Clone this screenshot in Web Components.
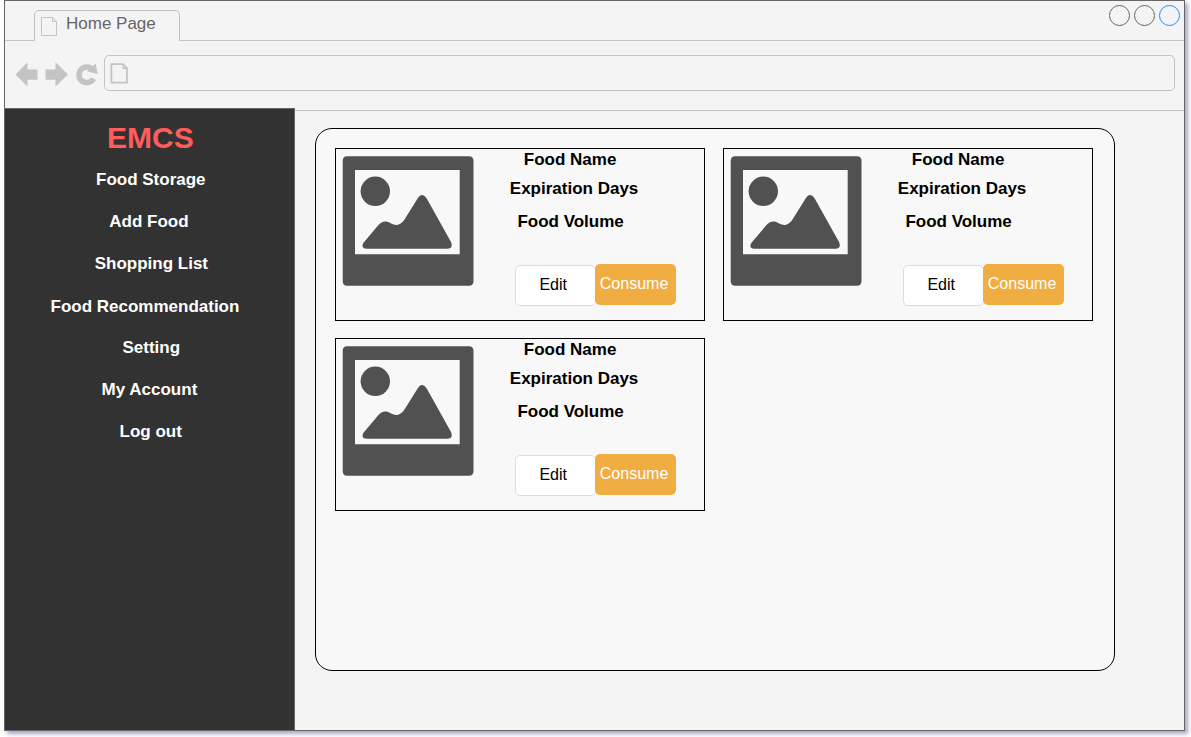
<!DOCTYPE html>
<html lang="en">
<head>
<meta charset="utf-8">
<title>Home Page</title>
<style>
body { margin: 0; min-height: 737px; background: #fff; font: 17px/19px "Liberation Sans", Arial, sans-serif; }
</style>
</head>
<body>
<browser-window>
  <tab-strip slot="chrome">Home Page</tab-strip>
  <address-bar slot="chrome"></address-bar>
  <side-nav slot="side">
    <span slot="brand">EMCS</span>
    <nav-item style="--x:91px">Food Storage</nav-item>
    <nav-item style="--x:104.3px;--gap:23px">Add Food</nav-item>
    <nav-item style="--x:89.7px;--gap:23px">Shopping List</nav-item>
    <nav-item style="--x:45.5px;--gap:24px">Food Recommendation</nav-item>
    <nav-item style="--x:117.5px;--gap:22px">Setting</nav-item>
    <nav-item style="--x:96.6px;--gap:23px">My Account</nav-item>
    <nav-item style="--x:114.6px;--gap:23px">Log out</nav-item>
  </side-nav>
  <card-panel>
    <food-card></food-card>
    <food-card></food-card>
    <food-card></food-card>
  </card-panel>
</browser-window>
<script>
function define(name, html) {
  const template = document.createElement('template');
  template.innerHTML = html;
  customElements.define(name, class extends HTMLElement {
    constructor() {
      super();
      this.attachShadow({ mode: 'open' }).append(template.content.cloneNode(true));
    }
  });
}

define('browser-window', `
<style>
:host { display: flex; flex-direction: column; box-sizing: border-box; width: 1181px; height: 731px; margin-left: 4px; border: 1px solid #666; background: #f4f4f4; box-shadow: 3px 3px 4px rgba(110,110,160,.6); }
.body { display: grid; grid-template-columns: 290px 1fr; flex: 1; min-height: 0; }
.side { display: flex; margin: -3px 0 -1px -1px; }
main { padding: 17px 0 0 20px; }
</style>
<slot name="chrome"></slot>
<div class="body"><div class="side"><slot name="side"></slot></div><main><slot></slot></main></div>`);

define('tab-strip', `
<style>
:host { display: flex; height: 40px; box-sizing: border-box; color: #666; }
i { border-bottom: 1px solid #c4c4c4; box-sizing: border-box; }
.before { width: 29px; }
.tab { display: flex; box-sizing: border-box; width: 146px; margin-top: 9px; border: 1px solid #c4c4c4; border-bottom: 0; border-radius: 5px 5px 0 0; padding: 3px 0 0 6px; }
.tab svg { width: 17px; height: 20px; margin-top: 2px; }
.tab span { padding-left: 8px; }
.after { flex: 1; display: flex; justify-content: flex-end; padding: 4px 3px 0 0; }
.after svg { width: 72px; height: 22px; }
</style>
<i class="before"></i>
<div class="tab">
<svg viewBox="0 0 17 20" fill="none" stroke="#c4c4c4"><path d="M.5 1.5H11.5L15.5 5.5V19.5H.5ZM11.5 1.5V5.5H15.5"/></svg>
<span><slot></slot></span></div>
<i class="after"><svg viewBox="0 0 72 22" fill="none" stroke="#666"><circle cx="10.5" cy="10.5" r="10"/><circle cx="35.5" cy="10.5" r="10"/><circle cx="60.5" cy="10.5" r="10" stroke="#1e90ff"/></svg></i>`);

define('address-bar', `
<style>
:host { display: flex; height: 70px; box-sizing: border-box; border-bottom: 1px solid #c4c4c4; padding: 14px 9px 0 10px; }
.tools { width: 89px; height: 36px; flex: none; }
.url { flex: 1; height: 36px; box-sizing: border-box; border: 1px solid #c4c4c4; border-radius: 5px; padding: 7px 0 0 5px; }
.url svg { display: block; width: 20px; height: 22px; }
</style>
<svg class="tools" viewBox="0 0 89 36" fill="#c4c4c4">
<path d="M.5 19.5 12.5 7.3V14.5H22.5V24.8H12.5V31.5ZM53 19.5 40.5 7.3V14.5H30.5V24.8H40.5V31.5Z"/>
<path d="M76.8 13.8A7.8 7.8 0 1 0 78.6 23.6" fill="none" stroke="#c4c4c4" stroke-width="5.6"/><path d="M80.6 8.4 82.7 19 71.9 16.3Z"/>
</svg>
<div class="url"><svg viewBox="0 0 20 22" fill="none" stroke="#c4c4c4" stroke-width="1.8"><path d="M1.4 1.2H13L16.9 5.2V19.7H1.4Z"/><path stroke-width="1.2" d="M13 1V5.3H17.2"/></svg></div>`);

define('side-nav', `
<style>
:host { display: block; box-sizing: border-box; flex: 1; background: #323232; border: 1px solid #666; color: #fff; font-weight: bold; }
.brand { color: #ff5c5c; font-size: 30px; line-height: 36px; padding: 11px 0 14px 102px; height: 36px; }
</style>
<div class="brand"><slot name="brand"></slot></div><slot></slot>`);

define('nav-item', `
<style>:host { display: block; height: 19px; margin-top: var(--gap, 0); padding-left: var(--x); white-space: nowrap; }</style><slot></slot>`);

define('card-panel', `
<style>
:host { display: grid; grid-template-columns: 370px 370px; grid-auto-rows: 173px; gap: 17px 18px; align-content: start; box-sizing: border-box; width: 800px; height: 543px; padding: 19px; border: 1px solid #000; border-radius: 17px; background: #f8f8f8; }
</style><slot></slot>`);

define('push-button', `
<style>
:host { display: block; box-sizing: border-box; width: 81px; height: 41px; border-radius: 5px; font-size: 16px; line-height: 18px; }
:host([kind=edit]) { background: #fff; border: 1px solid #dcdcdc; color: #000; padding: 10px 0 0 23.4px; margin-top: 1px; }
:host([kind=consume]) { background: #f0ad42; color: #fff; padding: 11px 0 0 4.8px; margin-left: -1px; }
</style><slot></slot>`);

define('picture-placeholder', `
<style>:host { display: block; width: 132px; height: 131px; } svg { display: block; }</style>
<svg width="132" height="131" viewBox="0 0 132 131" fill="#515151">
<path fill-rule="evenodd" d="M5 .3H127Q131.5 .3 131.5 5V125Q131.5 129.7 127 129.7H5Q.7 129.7 .7 125V5Q.7 .3 5 .3ZM13 14V98.3H117.7V14Z"/>
<circle cx="33.3" cy="35.3" r="14.7"/>
<path d="M21.3 87 36 69.5C40 65 44 64.5 49 67.5C54 70 58 69.5 62.2 64L75.3 43Q80 35 85 43L109.3 86.5Q111.3 92.7 105.5 92.8H24.5Q18.5 92.3 21.3 87Z"/>
</svg>`);

define('food-card', `
<style>
:host { display: flex; box-sizing: border-box; border: 1px solid #000; background: #f8f8f8; color: #000; font-weight: bold; }
picture-placeholder { margin: 7px 0 0 6px; }
.info { padding: 1px 0 0 35px; }
.name { margin-left: 14.8px; }
.days { margin: 10px 0 0 .8px; }
.volume { margin: 14px 0 0 8.4px; }
.actions { display: flex; font-weight: normal; margin: 33px 0 0 6px; }
</style>
<picture-placeholder></picture-placeholder>
<div class="info">
<div class="name">Food Name</div><div class="days">Expiration Days</div><div class="volume">Food Volume</div>
<div class="actions"><push-button kind="edit">Edit</push-button><push-button kind="consume">Consume</push-button></div>
</div>`);
</script>
</body>
</html>
